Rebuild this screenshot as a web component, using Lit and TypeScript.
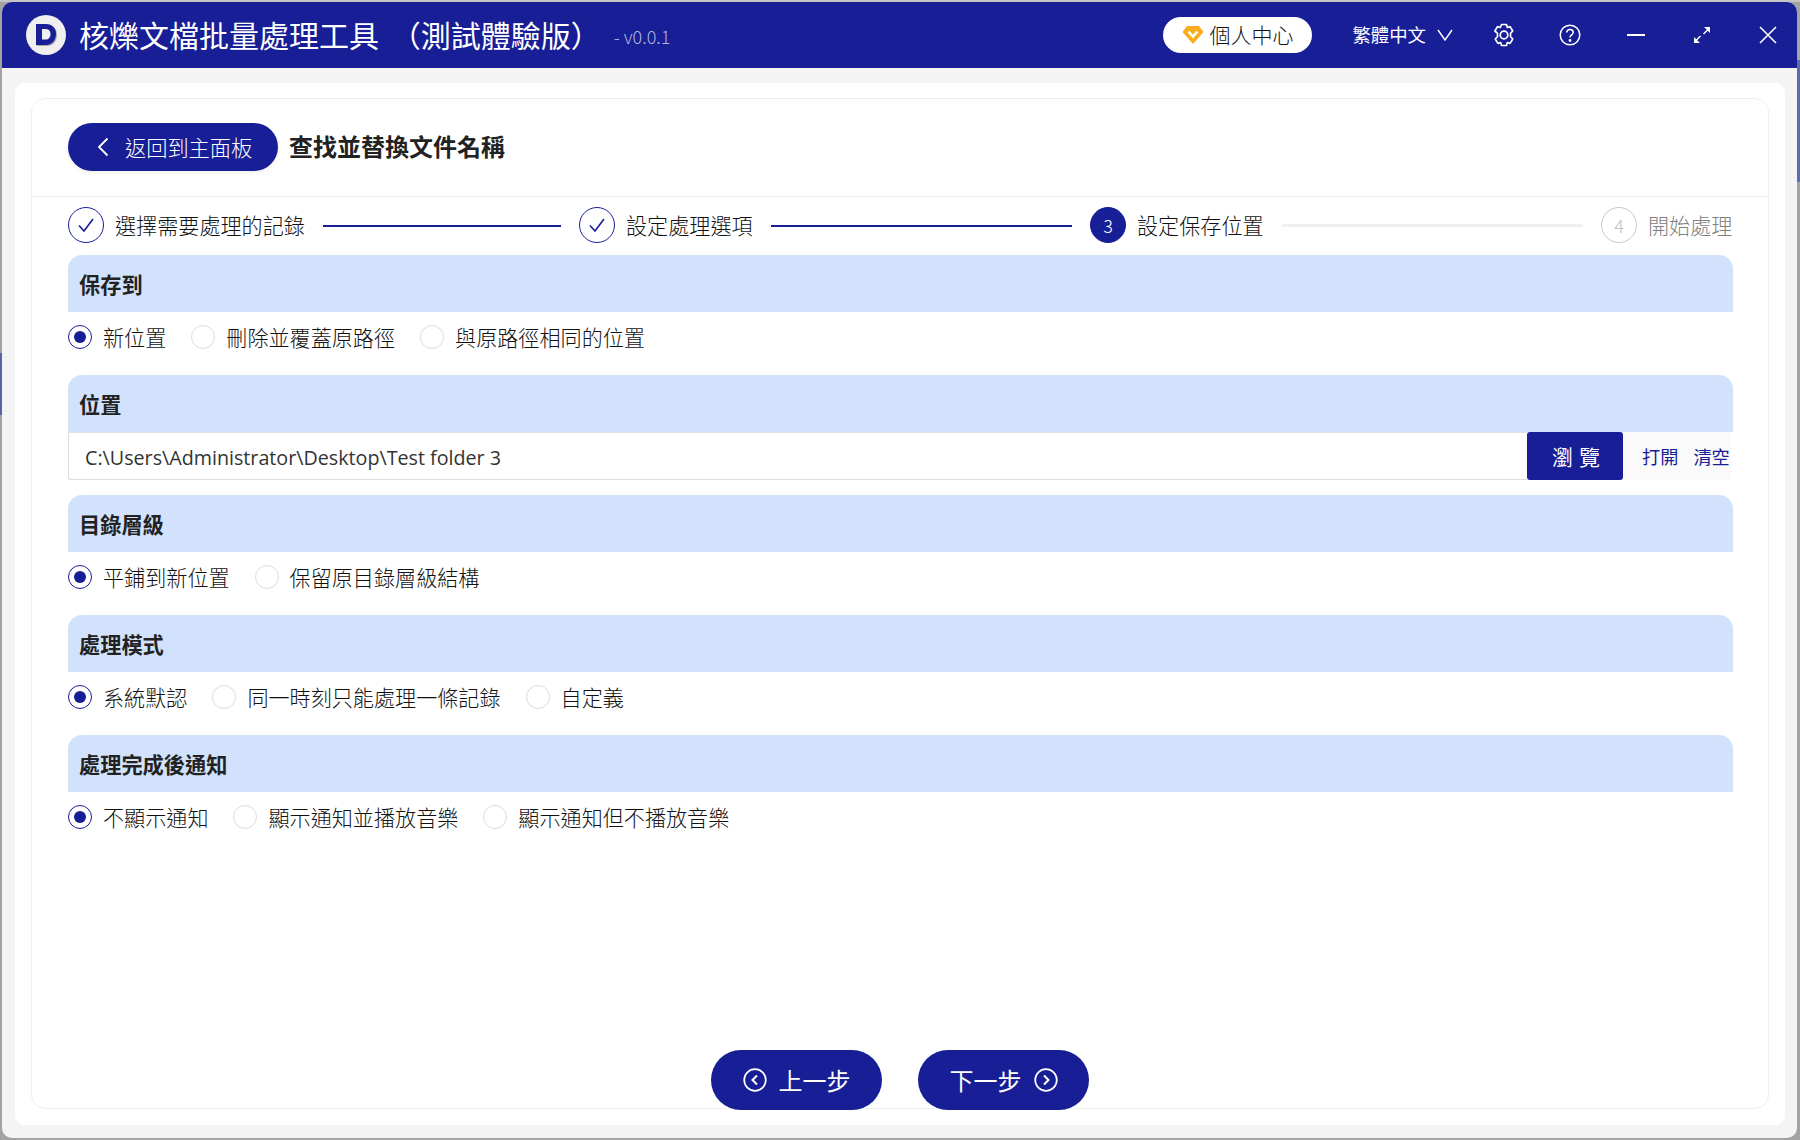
import { LitElement, html, css, svg } from "lit";
import { customElement } from "lit/decorators.js";

const check = svg`<path d="M11 18.5l5 5.5 9-12" fill="none" stroke="#181f97" stroke-width="1.6"/>`;

@customElement("app-root")
export class AppRoot extends LitElement {
  static styles = css`
    :host {
      display: block;
      width: 1800px;
      height: 1140px;
      background:
        linear-gradient(#5b60ad, #5b60ad) 0 353px / 2px 62px no-repeat,
        linear-gradient(#5f6cab, #5f6cab) right 60px / 3px 122px no-repeat,
        linear-gradient(#c4c4c4, #c4c4c4) 0 0 / 100% 2px no-repeat,
        #a3a3a3;
      font-family: "Noto Sans CJK TC", "Noto Sans", sans-serif;
      font-weight: 300;
      padding: 2px 3px 2px 2px;
      box-sizing: border-box;
      color: #111;
      overflow: hidden;
    }
    .win {
      height: 1136px;
      border-radius: 10px;
      overflow: hidden;
      background: #f4f4f4;
      display: flex;
      flex-direction: column;
    }
    .head {
      height: 66px;
      flex: none;
      background: #171e96;
      color: #fff;
      display: flex;
      align-items: center;
      padding-left: 24px;
    }
    .logo { width: 40px; height: 40px; flex: none; margin-right: 13px; }
    .app-title { font-size: 30px; font-weight: 400; line-height: 40px; white-space: nowrap; word-spacing: 5px; padding-bottom: 2px; }
    .ver { font-size: 18px; color: #b3b5dd; margin-left: 13px; white-space: nowrap; padding-top: 1px; }
    .spacer { flex: 1; }
    .pill {
      width: 149px; height: 36px; border-radius: 18px; background: #fff;
      color: #111; display: flex; align-items: center; justify-content: center;
      font-size: 21px; gap: 5px; box-sizing: border-box; margin-right: 40px; padding-bottom: 2px;
    }
    .pill svg { margin-top: 2px; }
    .lang { display: flex; align-items: center; font-size: 18.4px; font-weight: 400; margin-right: 40px; padding-bottom: 2px; }
    .lang svg { margin-left: 11px; margin-top: 2px; }
    .ico { display: block; flex: none; }
    .winbtns { display: flex; align-items: center; gap: 44px; padding-right: 18px; }
    .slot { width: 22px; display: flex; justify-content: center; }
    .body { flex: 1; padding: 15px 12px 13px 13px; display: flex; min-height: 0; }
    .panel {
      flex: 1; background: #fff; border-radius: 10px; padding: 15px 16px 16px 16px;
      display: flex; min-width: 0;
    }
    .card {
      flex: 1; border: 1px solid #eeeeee; border-radius: 14px; display: flex;
      flex-direction: column; min-width: 0; position: relative;
    }
    .top {
      height: 98px; flex: none; border-bottom: 1px solid #eeeeee; display: flex;
      align-items: center; padding: 0 35px 1px 36px; gap: 11px; box-sizing: border-box;
    }
    .back {
      width: 210px; height: 48px; border-radius: 24px; background: #171e96; color: #fff;
      display: flex; align-items: center; font-size: 21.2px; padding-left: 29px; gap: 16px;
      box-sizing: border-box; box-shadow: 0 2px 4px rgba(0,0,0,.06);
    }
    .back span { padding-bottom: 1px; }
    .page-title { font-size: 24px; font-weight: 700; color: #222; padding-bottom: 4px; }
    .steps {
      height: 58px; flex: none; display: flex; align-items: center; padding: 0 35px 2px 36px;
      box-sizing: border-box; font-size: 21.1px;
    }
    .step { flex: 1; display: flex; align-items: center; min-width: 0; }
    .step.last { flex: none; width: 132px; }
    .circle {
      width: 36px; height: 36px; border-radius: 50%; box-sizing: border-box;
      border: 1.4px solid #171e96; display: flex; align-items: center; justify-content: center;
      flex: none; font-size: 18px;
    }
    .circle.active { background: #171e96; color: #fff; }
    .circle.todo { border: 1.4px solid #c8c8c8; color: #bbb; }
    .slabel { margin-left: 11px; white-space: nowrap; }
    .slabel.todo { color: #808080; }
    .line { height: 2px; margin: 1px 18px 0; background: #171e96; flex: 1; }
    .line.todo { background: #f0f0f0; height: 3px; }
    .sections { padding: 0 35px 0 36px; display: flex; flex-direction: column; }
    .bar {
      height: 57px; background: #d3e2fc; border-radius: 14px 14px 0 0; display: flex;
      align-items: center; padding-left: 11px; font-size: 21.2px; font-weight: 700;
      color: #222; box-sizing: border-box;
    }
    .radios { height: 63px; display: flex; align-items: flex-start; padding-top: 13px; font-size: 21.1px; box-sizing: border-box; }
    .radio { display: flex; align-items: center; gap: 11px; margin-right: 25px; height: 24px; }
    .radio span:last-child { padding-bottom: 1px; }
    .dot {
      width: 24px; height: 24px; border-radius: 50%; border: 1px solid #dcdcdc;
      box-sizing: border-box; flex: none; display: flex; align-items: center; justify-content: center;
    }
    .dot.on { border: 1.5px solid #171e96; }
    .dot.on::after { content: ""; width: 12px; height: 12px; border-radius: 50%; background: #171e96; }
    .pathrow { height: 63px; display: flex; align-items: flex-start; }
    .input {
      flex: 1; height: 48px; border: 1px solid #dcdcdc; border-top-color: #e2e2e2; border-right: 0;
      border-radius: 0 0 0 3px; box-sizing: border-box; display: flex; align-items: center;
      padding: 2px 0 0 16px; font-family: "Open Sans", "Noto Sans", sans-serif; font-weight: 400; font-size: 19.7px; color: #333;
    }
    .browse {
      width: 96px; height: 48px; background: #171e96; color: #fff; border-radius: 3px;
      display: flex; align-items: center; justify-content: center; font-size: 21px; font-weight: 400; letter-spacing: 6px;
      padding-left: 8px; box-sizing: border-box; flex: none;
    }
    .links {
      width: 108px; height: 48px; background: #fafafa; display: flex; align-items: center;
      color: #171e96; font-size: 18.2px; font-weight: 400; gap: 15px; padding-left: 19px; box-sizing: border-box; flex: none;
      margin-right: 2px;
    }
    .foot {
      position: absolute; left: 0; right: 0; bottom: -2px; display: flex; justify-content: center; gap: 36px;
    }
    .nav {
      width: 171px; height: 60px; border-radius: 30px; background: #171e96; color: #fff; display: flex;
      align-items: center; justify-content: center; gap: 12px; font-size: 24px; font-weight: 400;
    }
    .nav span { padding-bottom: 1px; }
  `;

  private radios(items: string[]) {
    return html`<div class="radios">
      ${items.map(
        (t, i) => html`<div class="radio"><span class="dot ${i === 0 ? "on" : ""}"></span><span>${t}</span></div>`
      )}
    </div>`;
  }

  render() {
    return html`<div class="win">
      <div class="head">
        <svg class="logo" viewBox="0 0 40 40">
          <circle cx="20" cy="20" r="20" fill="#efefef" />
          <path d="M11 10h10c6.500 0 10 4.500 10 10s-3.500 11-10 11H11z" fill="#a9a9a9" />
          <path d="M10 9h10c6.500 0 10 4.500 10 10s-3.500 11-10 11H10z" fill="#171e96" />
          <path d="M16 14h4c3 0 4.500 2.200 4.500 5s-1.500 5.500-4.500 5.500h-4z" fill="#efefef" />
        </svg>
        <div class="app-title">核爍文檔批量處理工具 （測試體驗版）</div>
        <div class="ver">- v0.0.1</div>
        <div class="spacer"></div>
        <div class="pill">
          <svg class="ico" width="22" height="20" viewBox="0 0 22 20">
            <path d="M5 1h12l4.500 6L11 19 .5 7z" fill="#f9ad1c" />
            <path d="M6.500 6.500L11 11.500l4.500-5" fill="none" stroke="#fff" stroke-width="2.600" />
          </svg>
          <span>個人中心</span>
        </div>
        <div class="lang">
          <span>繁體中文</span>
          <svg class="ico" width="16" height="12" viewBox="0 0 16 12"><path d="M1 1l7 10 7-10" fill="none" stroke="#fff" stroke-width="1.400" /></svg>
        </div>
        <div class="winbtns">
          <div class="slot"><svg class="ico" width="22" height="24" viewBox="0 0 22 24" fill="none" stroke="#fff" stroke-width="1.700">
            <path d="M8.500 1.500h5l.8 3 2.800-.9 2.600 4.400-2.200 2.300v3.400l2.200 2.300-2.600 4.400-2.800-.9-.8 3h-5l-.8-3-2.800.9-2.600-4.400 2.200-2.300v-3.400L1.900 8l2.600-4.400 2.800.9z" stroke-linejoin="round" />
            <circle cx="11" cy="12" r="3.800" />
          </svg></div>
          <div class="slot"><svg class="ico" width="22" height="22" viewBox="0 0 22 22" fill="none" stroke="#fff" stroke-width="1.500">
            <circle cx="11" cy="11" r="9.800" />
            <path d="M7.800 8.600c0-2 1.400-3.200 3.200-3.200s3.200 1.200 3.200 3c0 2.600-3.200 2.400-3.200 5" />
            <circle cx="11" cy="16.500" r=".7" fill="#fff" />
          </svg></div>
          <div class="slot"><svg class="ico" width="18" height="18" viewBox="0 0 18 18"><path d="M0 9h18" stroke="#fff" stroke-width="1.800" /></svg></div>
          <div class="slot"><svg class="ico" width="18" height="18" viewBox="0 0 18 18" fill="#fff">
            <path d="M11 1h6v6l-2.200-2.200-3.800 3.800-1-1 3.800-3.800zM7 17H1v-6l2.200 2.200 3.800-3.800 1 1-3.800 3.800z" />
          </svg></div>
          <div class="slot"><svg class="ico" width="18" height="18" viewBox="0 0 18 18"><path d="M1 1l16 16M17 1L1 17" stroke="#fff" stroke-width="1.600" /></svg></div>
        </div>
      </div>
      <div class="body">
        <div class="panel">
          <div class="card">
            <div class="top">
              <div class="back">
                <svg class="ico" width="12" height="20" viewBox="0 0 12 20"><path d="M10.500 1.500L2 10l8.500 8.500" fill="none" stroke="#fff" stroke-width="1.800" /></svg>
                <span>返回到主面板</span>
              </div>
              <div class="page-title">查找並替換文件名稱</div>
            </div>
            <div class="steps">
              <div class="step">
                <div class="circle"><svg class="ico" width="36" height="36" viewBox="0 0 36 36">${check}</svg></div>
                <div class="slabel">選擇需要處理的記錄</div>
                <div class="line"></div>
              </div>
              <div class="step">
                <div class="circle"><svg class="ico" width="36" height="36" viewBox="0 0 36 36">${check}</svg></div>
                <div class="slabel">設定處理選項</div>
                <div class="line"></div>
              </div>
              <div class="step">
                <div class="circle active">3</div>
                <div class="slabel">設定保存位置</div>
                <div class="line todo"></div>
              </div>
              <div class="step last">
                <div class="circle todo">4</div>
                <div class="slabel todo">開始處理</div>
              </div>
            </div>
            <div class="sections">
              <div class="bar">保存到</div>
              ${this.radios(["新位置", "刪除並覆蓋原路徑", "與原路徑相同的位置"])}
              <div class="bar">位置</div>
              <div class="pathrow">
                <div class="input">C:\\Users\\Administrator\\Desktop\\Test folder 3</div>
                <div class="browse">瀏覽</div>
                <div class="links"><span>打開</span><span>清空</span></div>
              </div>
              <div class="bar">目錄層級</div>
              ${this.radios(["平鋪到新位置", "保留原目錄層級結構"])}
              <div class="bar">處理模式</div>
              ${this.radios(["系統默認", "同一時刻只能處理一條記錄", "自定義"])}
              <div class="bar">處理完成後通知</div>
              ${this.radios(["不顯示通知", "顯示通知並播放音樂", "顯示通知但不播放音樂"])}
            </div>
            <div class="foot">
              <div class="nav">
                <svg class="ico" width="24" height="24" viewBox="0 0 24 24" fill="none" stroke="#fff" stroke-width="1.700"><circle cx="12" cy="12" r="10.800" /><path d="M14 7.500L9.500 12l4.500 4.500" stroke-width="2" /></svg>
                <span>上一步</span>
              </div>
              <div class="nav">
                <span>下一步</span>
                <svg class="ico" width="24" height="24" viewBox="0 0 24 24" fill="none" stroke="#fff" stroke-width="1.700"><circle cx="12" cy="12" r="10.800" /><path d="M10 7.500L14.500 12 10 16.500" stroke-width="2" /></svg>
              </div>
            </div>
          </div>
        </div>
      </div>
    </div>`;
  }
}
